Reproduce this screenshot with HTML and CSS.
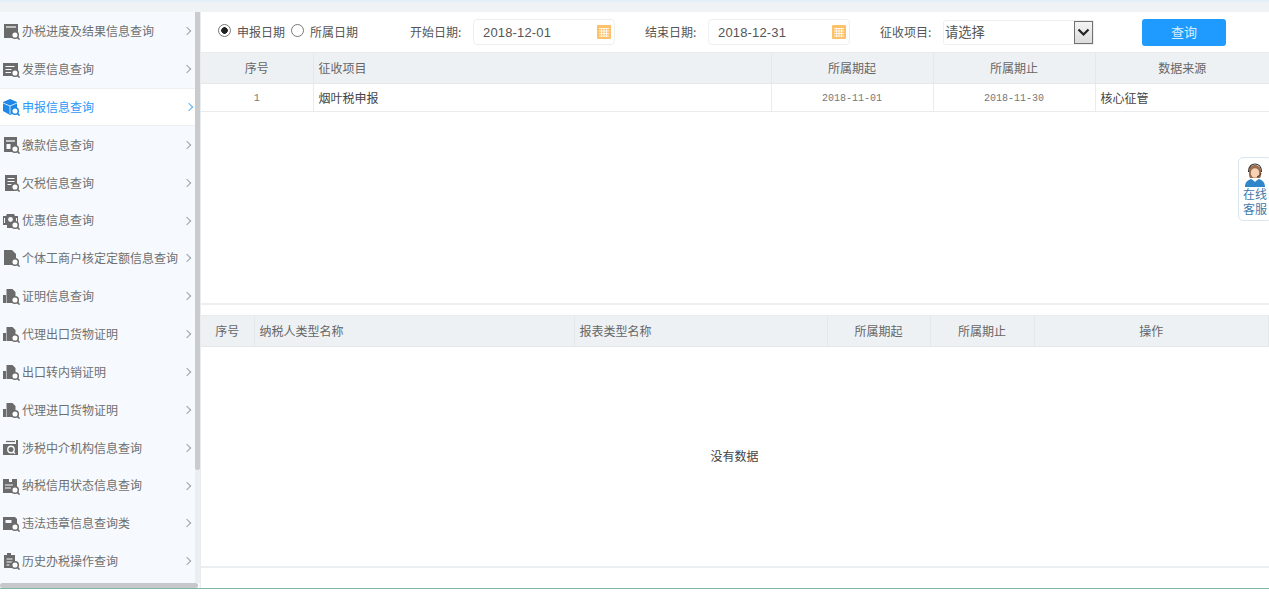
FILE: index.html
```html
<!DOCTYPE html>
<html lang="zh-CN">
<head>
<meta charset="utf-8">
<title>申报信息查询</title>
<link rel="stylesheet" href="styles.css">
</head>
<body>
<svg class="defs" width="0" height="0" aria-hidden="true">
  <defs>
    <symbol id="lens" viewBox="0 0 18 18"><circle cx="13" cy="13" r="3.3" fill="#fff" stroke="currentColor" stroke-width="1.5"/><path d="M15.4 15.4L17.6 17.6" stroke="currentColor" stroke-width="1.5"/></symbol>
    <symbol id="i-folder" viewBox="0 0 18 18"><path d="M2 2h14v9h-4v5H2z" fill="currentColor"/><path d="M4 5h10" stroke="#f6fafe" stroke-width="1.2"/><use href="#lens"/></symbol>
    <symbol id="i-list" viewBox="0 0 18 18"><path d="M1 3h15v8h-4v5H1z" fill="currentColor"/><path d="M3.500 6.500h9M3.500 9.500h6M3.500 12.500h6" stroke="#f6fafe" stroke-width="1.200"/><use href="#lens"/></symbol>
    <symbol id="i-cube" viewBox="0 0 18 18"><path d="M8 1l7 3v6l-3 2v3l-4 2-7-4V4z" fill="currentColor"/><path d="M1 5l7 3 7-3M8 8v8" stroke="#fff" stroke-width=".8" fill="none"/><use href="#lens"/></symbol>
    <symbol id="i-pay" viewBox="0 0 18 18"><path d="M2 1h13v9h-3v6H2z" fill="currentColor"/><path d="M4 5h9" stroke="#f6fafe" stroke-width="1.300"/><path d="M4.500 8h4v5h-4z" fill="#f6fafe"/><use href="#lens"/></symbol>
    <symbol id="i-doc" viewBox="0 0 18 18"><path d="M3 1h12v10h-3v6H3z" fill="currentColor"/><path d="M5.500 4.500h7M5.500 7.500h7M5.500 10.500h4" stroke="#f6fafe" stroke-width="1.200"/><use href="#lens"/></symbol>
    <symbol id="i-gift" viewBox="0 0 18 18"><path d="M1 4h3l1-2h7l1 2h3v9h-3v3H5v-3H1z" fill="currentColor"/><circle cx="8.500" cy="7.500" r="2.400" fill="#f6fafe"/><path d="M2.500 6v5M14.500 6v5" stroke="#f6fafe"/><use href="#lens"/></symbol>
    <symbol id="i-file" viewBox="0 0 18 18"><path d="M2 1h8l4 4v6h-3v5H2z" fill="currentColor"/><use href="#lens"/></symbol>
    <symbol id="i-cert" viewBox="0 0 18 18"><path d="M1 8h3v8H1z" fill="currentColor"/><path d="M4.500 2h6l3 3v6h-3v5h-6z" fill="currentColor"/><use href="#lens"/></symbol>
    <symbol id="i-org" viewBox="0 0 18 18"><path d="M1 5h13v-4h2v15H1z" fill="currentColor"/><path d="M4 2.500h9" stroke="currentColor" stroke-width="1.200"/><circle cx="9" cy="10.500" r="3.200" fill="none" stroke="#f6fafe" stroke-width="1.400"/><path d="M11 12.800l2 2" stroke="#f6fafe" stroke-width="1.400"/></symbol>
    <symbol id="i-credit" viewBox="0 0 18 18"><path d="M1 2h6v3h3V2h5v9h-3v5H1z" fill="currentColor"/><path d="M3 8h8M3 11h6" stroke="#f6fafe" stroke-width="1.200"/><use href="#lens"/></symbol>
    <symbol id="i-break" viewBox="0 0 18 18"><path d="M1 3h12l2 2v6h-3v5H1z" fill="currentColor"/><path d="M3.500 6h6v3h-6z" fill="#f6fafe"/><use href="#lens"/></symbol>
    <symbol id="i-hist" viewBox="0 0 18 18"><path d="M2 3h3V1h4v2h4v8h-2v5H2z" fill="currentColor"/><path d="M4.500 7h6M4.500 10h6M4.500 13h3" stroke="#f6fafe" stroke-width="1.100"/><use href="#lens"/></symbol>
    <symbol id="i-cal" viewBox="0 0 14 14"><rect width="14" height="14" rx="1" fill="#fdc169"/><path d="M2 3.500h10M2 6h10M2 8.500h10M2 11h10M4.500 3.500V12M7 3.500V12M9.500 3.500V12" stroke="#fff" stroke-width=".8" fill="none"/></symbol>
  </defs>
</svg>

<div class="strip"></div>
<div class="app">
  <aside class="side">
    <div class="side-body">
      <nav class="menu">
        <a class="item"><svg class="ico"><use href="#i-folder"/></svg><span class="name">办税进度及结果信息查询</span><i class="chev"></i></a>
        <a class="item"><svg class="ico"><use href="#i-list"/></svg><span class="name">发票信息查询</span><i class="chev"></i></a>
        <a class="item active"><svg class="ico"><use href="#i-cube"/></svg><span class="name">申报信息查询</span><i class="chev"></i></a>
        <a class="item"><svg class="ico"><use href="#i-pay"/></svg><span class="name">缴款信息查询</span><i class="chev"></i></a>
        <a class="item"><svg class="ico"><use href="#i-doc"/></svg><span class="name">欠税信息查询</span><i class="chev"></i></a>
        <a class="item"><svg class="ico"><use href="#i-gift"/></svg><span class="name">优惠信息查询</span><i class="chev"></i></a>
        <a class="item"><svg class="ico"><use href="#i-file"/></svg><span class="name">个体工商户核定定额信息查询</span><i class="chev"></i></a>
        <a class="item"><svg class="ico"><use href="#i-cert"/></svg><span class="name">证明信息查询</span><i class="chev"></i></a>
        <a class="item"><svg class="ico"><use href="#i-cert"/></svg><span class="name">代理出口货物证明</span><i class="chev"></i></a>
        <a class="item"><svg class="ico"><use href="#i-cert"/></svg><span class="name">出口转内销证明</span><i class="chev"></i></a>
        <a class="item"><svg class="ico"><use href="#i-cert"/></svg><span class="name">代理进口货物证明</span><i class="chev"></i></a>
        <a class="item"><svg class="ico"><use href="#i-org"/></svg><span class="name">涉税中介机构信息查询</span><i class="chev"></i></a>
        <a class="item"><svg class="ico"><use href="#i-credit"/></svg><span class="name">纳税信用状态信息查询</span><i class="chev"></i></a>
        <a class="item"><svg class="ico"><use href="#i-break"/></svg><span class="name">违法违章信息查询类</span><i class="chev"></i></a>
        <a class="item"><svg class="ico"><use href="#i-hist"/></svg><span class="name">历史办税操作查询</span><i class="chev"></i></a>
      </nav>
      <div class="vbar"><div class="vthumb"></div></div>
    </div>
    <div class="hbar"></div>
  </aside>

  <main class="main">
    <form class="toolbar">
      <label class="radio-l"><input class="radio" type="radio" name="d" checked>申报日期</label>
      <label class="radio-l second"><input class="radio" type="radio" name="d">所属日期</label>
      <span class="lab lab-start">开始日期:</span>
      <span class="date"><span class="date-v">2018-12-01</span><svg class="cal"><use href="#i-cal"/></svg></span>
      <span class="lab lab-end">结束日期:</span>
      <span class="date"><span class="date-v">2018-12-31</span><svg class="cal"><use href="#i-cal"/></svg></span>
      <span class="lab lab-item">征收项目:</span>
      <span class="sel"><span class="sel-v">请选择</span><span class="sel-btn"><svg width="13" height="9" viewBox="0 0 13 9"><path d="M1.500 1.500l5 5 5-5" fill="none" stroke="#222" stroke-width="2.200"/></svg></span></span>
      <button class="query" type="button">查询</button>
    </form>

    <section class="grid-top">
      <table class="tbl t1">
        <colgroup><col class="c1"><col class="c2"><col class="c3"><col class="c3"><col></colgroup>
        <thead><tr><th>序号</th><th class="l">征收项目</th><th>所属期起</th><th>所属期止</th><th>数据来源</th></tr></thead>
        <tbody><tr><td class="num">1</td><td class="l strong">烟叶税申报</td><td class="num">2018-11-01</td><td class="num">2018-11-30</td><td class="l strong">核心征管</td></tr></tbody>
      </table>
    </section>

    <section class="grid-bottom">
      <table class="tbl t2">
        <colgroup><col class="d1"><col class="d2"><col class="d3"><col class="d4"><col class="d5"><col></colgroup>
        <thead><tr><th>序号</th><th class="l">纳税人类型名称</th><th class="l">报表类型名称</th><th>所属期起</th><th>所属期止</th><th>操作</th></tr></thead>
      </table>
      <div class="empty">没有数据</div>
    </section>
  </main>
</div>
<div class="foot"></div>

<a class="service">
  <svg class="agent" width="22" height="24" viewBox="0 0 22 24">
    <path d="M1 24c0-5 3-7 6-8l4 2 4-2c3 1 6 3 6 8z" fill="#2f86c9"/>
    <path d="M8 16l3 3 3-3-1-2H9z" fill="#fff"/>
    <path d="M5 9c0-5 3-7 6-7s6 2 6 7c0 3 0 5-1 6H6c-1-1-1-3-1-6z" fill="#9c6b4a"/>
    <ellipse cx="11" cy="10" rx="4.200" ry="4.800" fill="#f7d2b4"/>
    <path d="M4.500 9C4.500 3 8 1 11 1s6.500 2 6.500 8" fill="none" stroke="#333" stroke-width="1.200"/>
    <path d="M17 10c0 2-2 3.500-4 3.500" fill="none" stroke="#333" stroke-width=".9"/>
  </svg>
  <span class="svc-t">在线<br>客服</span>
</a>
</body>
</html>
```

FILE: styles.css
```css
* { box-sizing: border-box; }
html, body { margin: 0; height: 100%; }
body {
  width: 1269px;
  height: 594px;
  overflow: hidden;
  position: relative;
  background: #fff;
  font: 12px/1.2 "Noto Sans CJK SC", "Liberation Sans", sans-serif;
  color: #555;
}
.defs { position: absolute; }

.strip {
  height: 12px;
  background: #f0f3f5;
  border-top: 2px solid #e4eff8;
}
.app { display: flex; height: 576px; }
.foot { height: 6px; border-top: 1px solid #7fb9a5; background: #fff; }

/* sidebar */
.side { width: 200px; display: flex; flex-direction: column; background: #f6fafe; flex: none; }
.side-body { display: flex; height: 571px; }
.menu { width: 195px; flex: none; padding-top: .4px; }
.item {
  display: flex;
  align-items: center;
  height: 37.860px;
  padding-left: 2px;
  color: #6f6f6f;
}
.ico { width: 18px; height: 18px; flex: none; color: #6b6b6b; }
.name { margin-left: 2px; flex: 1; white-space: nowrap; }
.chev {
  width: 6px; height: 6px;
  margin-right: 5px;
  border-top: 1px solid #9aa3aa;
  border-right: 1px solid #9aa3aa;
  transform: rotate(45deg);
}
.item.active {
  background: #fff;
  color: #2d97f6;
  border-top: 1px solid #edf0f2;
  border-bottom: 1px solid #edf0f2;
}
.item.active .ico { color: #1c87e6; }
.item.active .chev { border-color: #5fb0f0; margin-right: 3px; }
.vbar { width: 5px; background: #eceff1; }
.vthumb { height: 458px; background: #c9cbcc; border-radius: 0 0 3px 3px; }
.hbar { height: 5px; width: 198px; background: #c6c8c9; border-radius: 3px; }

/* main */
.main { flex: 1; min-width: 0; border-left: 1px solid #e9ecee; background: #fff; }
.toolbar { display: flex; align-items: center; height: 40px; padding-left: 17px; color: #555; }
.radio-l { display: flex; align-items: center; white-space: nowrap; }
.radio-l.second { margin-left: 6px; }
.radio {
  appearance: none;
  width: 13px; height: 13px;
  margin: -3px 6px 0 0;
  border: 1px solid #777;
  border-radius: 50%;
  background: #fff;
}
.radio:checked { background: radial-gradient(circle, #222 0 3px, #fff 3.6px); }
.lab { white-space: nowrap; width: 55px; }
.lab-start { margin-left: 52px; margin-right: 8px; }
.lab-end { margin-left: 30px; margin-right: 8px; }
.lab-item { margin-left: 30px; margin-right: 8px; }
.date {
  display: flex;
  align-items: center;
  justify-content: space-between;
  width: 142px;
  height: 26px;
  padding: 0 3px 0 9px;
  border: 1px solid #edf0f2;
  border-radius: 4px;
  background: #fff;
}
.date-v { font: 13px "Liberation Sans", sans-serif; color: #555; letter-spacing: .15px; }
.cal { width: 14px; height: 14px; }
.sel {
  display: flex;
  align-items: center;
  justify-content: space-between;
  width: 151px;
  height: 25px;
  padding-left: 1px;
  border: 1px solid #edf0f2;
  border-radius: 3px 0 0 3px;
  font-size: 13.300px;
  color: #555;
}
.sel-btn {
  display: flex;
  align-items: center;
  justify-content: center;
  width: 19px;
  height: 23px;
  border: 1px solid #707070;
  background: linear-gradient(#f4f4f4, #dcdcdc);
}
.query {
  width: 84px;
  height: 27px;
  margin-left: 48px;
  border: 0;
  border-radius: 3px;
  background: #1f9bff;
  color: #d8eeff;
  font: inherit;
  font-size: 13px;
}

/* tables */
.tbl { width: 100%; table-layout: fixed; border-collapse: collapse; }
.tbl th {
  height: 31px;
  padding: 0;
  background: #eef1f4;
  font-weight: 400;
  color: #666;
  text-align: center;
  border-left: 1px solid #e4e8eb;
  border-top: 1px solid #e9ecee;
  border-bottom: 1px solid #e4e8eb;
}
.tbl th:first-child { border-left: 0; }
.tbl th.l { text-align: left; padding-left: 5px; }
.tbl td {
  height: 28px;
  padding: 1px 0 0;
  text-align: center;
  border-left: 1px solid #e9ecee;
  border-bottom: 1px solid #e9ecee;
}
.tbl td:first-child { border-left: 0; }
.tbl td.l { text-align: left; padding-left: 5px; }
.strong { color: #444; }
.num { font: 10px "Liberation Mono", monospace; color: #777; }

.c1 { width: 112px; }
.c2 { width: 458px; }
.c3 { width: 162px; }
.d1 { width: 53px; }
.d2 { width: 320px; }
.d3 { width: 253px; }
.d4 { width: 103px; }
.d5 { width: 104px; }

.grid-top { height: 253px; border-bottom: 2px solid #eceff1; }
.grid-bottom { margin-top: 10px; height: 253px; border-bottom: 2px solid #eceff1; }
.t2 { border-right: 1px solid #e4e8eb; }
.empty {
  display: flex;
  align-items: center;
  justify-content: center;
  height: 218px;
  padding-right: 1px;
  color: #444;
}

/* floating widget */
.service {
  position: absolute;
  left: 1238px;
  top: 157px;
  width: 34px;
  height: 64px;
  padding: 5px 0 0 4px;
  border: 1px solid #d9e6f0;
  border-radius: 5px;
  background: #fff;
  color: #3d79ad;
}
.agent { display: block; margin-left: 1px; }
.svc-t { display: block; font-size: 12px; line-height: 15px; margin-top: -1px; white-space: nowrap; }
```
